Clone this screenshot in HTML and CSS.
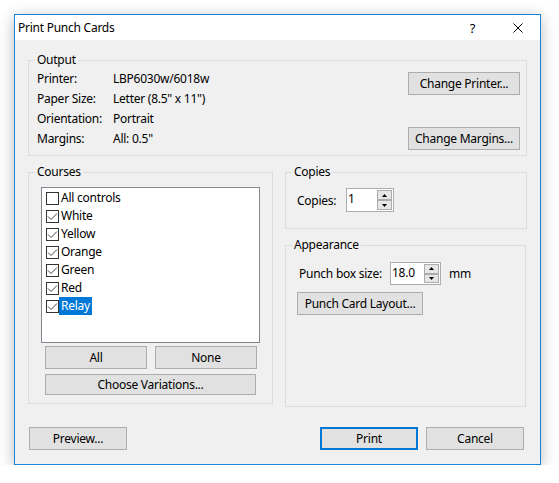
FILE: index.html
```html
<!DOCTYPE html>
<html>
<head>
<meta charset="utf-8">
<title>Print Punch Cards</title>
<link rel="stylesheet" href="styles.css">
</head>
<body>
<div class="window">
  <div class="titlebar">
    <span class="title">Print Punch Cards</span>
    <span class="cap-btn help">?</span>
    <span class="cap-btn close"><svg width="10" height="10" viewBox="0 0 10 10"><path d="M0.5 0.5 L9.5 9.5 M9.5 0.5 L0.5 9.5" stroke="#000" stroke-width="1"/></svg></span>
  </div>
  <div class="dlg-body">
    <fieldset class="group output">
      <legend>Output</legend>
      <div class="output-inner">
        <div class="props">
          <span>Printer:</span><span>LBP6030w/6018w</span>
          <span>Paper Size:</span><span>Letter (8.5" x 11")</span>
          <span>Orientation:</span><span>Portrait</span>
          <span>Margins:</span><span>All: 0.5"</span>
        </div>
        <div class="output-buttons">
          <button class="btn btn-wide">Change Printer...</button>
          <button class="btn btn-wide">Change Margins...</button>
        </div>
      </div>
    </fieldset>

    <div class="middle">
      <fieldset class="group courses">
        <legend>Courses</legend>
        <div class="courses-inner">
          <div class="listbox">
            <div class="item"><span class="check"></span><span class="item-label">All controls</span></div>
            <div class="item"><span class="check checked"><svg width="11" height="11" viewBox="0 0 11 11"><path d="M1 5.5 L4 8.5 L10 2.5" fill="none" stroke="#444" stroke-width="1"/></svg></span><span class="item-label">White</span></div>
            <div class="item"><span class="check checked"><svg width="11" height="11" viewBox="0 0 11 11"><path d="M1 5.5 L4 8.5 L10 2.5" fill="none" stroke="#444" stroke-width="1"/></svg></span><span class="item-label">Yellow</span></div>
            <div class="item"><span class="check checked"><svg width="11" height="11" viewBox="0 0 11 11"><path d="M1 5.5 L4 8.5 L10 2.5" fill="none" stroke="#444" stroke-width="1"/></svg></span><span class="item-label">Orange</span></div>
            <div class="item"><span class="check checked"><svg width="11" height="11" viewBox="0 0 11 11"><path d="M1 5.5 L4 8.5 L10 2.5" fill="none" stroke="#444" stroke-width="1"/></svg></span><span class="item-label">Green</span></div>
            <div class="item"><span class="check checked"><svg width="11" height="11" viewBox="0 0 11 11"><path d="M1 5.5 L4 8.5 L10 2.5" fill="none" stroke="#444" stroke-width="1"/></svg></span><span class="item-label">Red</span></div>
            <div class="item"><span class="check checked"><svg width="11" height="11" viewBox="0 0 11 11"><path d="M1 5.5 L4 8.5 L10 2.5" fill="none" stroke="#444" stroke-width="1"/></svg></span><span class="item-label selected">Relay</span></div>
          </div>
          <div class="list-buttons">
            <button class="btn btn-half">All</button>
            <button class="btn btn-half">None</button>
          </div>
          <button class="btn btn-variations">Choose Variations...</button>
        </div>
      </fieldset>

      <div class="right-col">
        <fieldset class="group copies">
          <legend>Copies</legend>
          <div class="copies-inner">
            <span class="copies-label">Copies:</span>
            <div class="spin spin-copies">
              <span class="spin-text">1</span>
              <span class="spin-btns">
                <span class="spin-btn"><svg width="5" height="3" viewBox="0 0 5 3"><path d="M2.5 0 L5 3 L0 3 Z" fill="#000"/></svg></span>
                <span class="spin-btn"><svg width="5" height="3" viewBox="0 0 5 3"><path d="M0 0 L5 0 L2.5 3 Z" fill="#000"/></svg></span>
              </span>
            </div>
          </div>
        </fieldset>

        <fieldset class="group appearance">
          <legend>Appearance</legend>
          <div class="appearance-inner">
            <div class="size-row">
              <span class="size-label">Punch box size:</span>
              <div class="spin spin-size">
                <span class="spin-text">18.0</span>
                <span class="spin-btns">
                  <span class="spin-btn"><svg width="5" height="3" viewBox="0 0 5 3"><path d="M2.5 0 L5 3 L0 3 Z" fill="#000"/></svg></span>
                  <span class="spin-btn"><svg width="5" height="3" viewBox="0 0 5 3"><path d="M0 0 L5 0 L2.5 3 Z" fill="#000"/></svg></span>
                </span>
              </div>
              <span class="unit">mm</span>
            </div>
            <button class="btn btn-layout">Punch Card Layout...</button>
          </div>
        </fieldset>
      </div>
    </div>

    <div class="footer">
      <button class="btn btn-footer">Preview...</button>
      <div class="footer-right">
        <button class="btn btn-footer btn-default">Print</button>
        <button class="btn btn-footer">Cancel</button>
      </div>
    </div>
  </div>
</div>
</body>
</html>
```

FILE: styles.css
```css
* {
  box-sizing: border-box;
}

html,
body {
  margin: 0;
  padding: 0;
  background: #ffffff;
}

body {
  font-family: "Noto Sans", "Segoe UI", sans-serif;
  font-size: 12px;
  letter-spacing: -0.25px;
  color: #000000;
}

.window {
  margin: 14px 0 0 14px;
  width: 527px;
  height: 451px;
  border: 1px solid #1c84d8;
  background: #f0f0f0;
  box-shadow: 0 3px 14px rgba(0, 0, 0, 0.28);
  display: flex;
  flex-direction: column;
}

.titlebar {
  height: 25px;
  background: #ffffff;
  display: flex;
  align-items: center;
  padding-left: 3px;
}

.title {
  flex: 1;
  line-height: 16px;
}

.cap-btn {
  width: 45px;
  height: 25px;
  display: flex;
  align-items: center;
  justify-content: center;
}

.help {
  font-size: 13px;
}

.dlg-body {
  flex: 1;
  padding: 12px 13px 14px 13px;
  display: flex;
  flex-direction: column;
}

.group {
  margin: 0;
  padding: 0;
  border: 1px solid #dcdcdc;
  min-width: 0;
}

.group legend {
  margin-left: 6px;
  padding: 0 2px;
  line-height: 16px;
}

.output-inner {
  display: flex;
  padding: 0 6px 5px 8px;
}

.props {
  flex: 1;
  display: grid;
  grid-template-columns: 76px auto;
  grid-auto-rows: 20px;
  align-items: center;
}

.output-buttons {
  display: flex;
  flex-direction: column;
  justify-content: space-between;
  padding-top: 4px;
  height: 82px;
}

.btn {
  font-family: inherit;
  font-size: 12px;
  letter-spacing: inherit;
  color: #000000;
  background: #e1e1e1;
  border: 1px solid #adadad;
  height: 23px;
  padding: 0;
  margin: 0;
  line-height: 16px;
}

.btn-wide {
  width: 112px;
}

.middle {
  display: flex;
  margin-top: 8px;
  gap: 12px;
  align-items: flex-start;
}

.courses {
  width: 245px;
  height: 240px;
}

.courses-inner {
  padding: 7px 0 0 12px;
}

.listbox {
  width: 219px;
  height: 156px;
  background: #ffffff;
  border: 1px solid #828790;
  padding: 1px 0 0 4px;
}

.item {
  height: 18px;
  display: flex;
  align-items: center;
}

.check {
  width: 13px;
  height: 13px;
  border: 1px solid #333333;
  background: #ffffff;
  display: flex;
  align-items: center;
  justify-content: center;
}

.item-label {
  padding: 0 2px;
  height: 18px;
  line-height: 18px;
}

.selected {
  background: #0078d7;
  color: #ffffff;
}

.list-buttons {
  display: flex;
  gap: 8px;
  margin: 3px 0 0 4px;
}

.btn-half {
  width: 102px;
}

.btn-variations {
  display: block;
  margin: 5px 0 0 4px;
  width: 211px;
  height: 21px;
}

.right-col {
  display: flex;
  flex-direction: column;
  gap: 8px;
}

.copies {
  width: 242px;
  height: 65px;
}

.copies-inner {
  display: flex;
  align-items: center;
  padding: 8px 0 0 11px;
}

.copies-label {
  width: 49px;
}

.spin {
  display: flex;
  background: #ffffff;
  border: 1px solid #abadb3;
  height: 24px;
}

.spin-copies {
  width: 48px;
}

.spin-size {
  width: 51px;
  height: 23px;
}

.spin-text {
  flex: 1;
  padding-left: 1px;
  line-height: 20px;
}

.spin-btns {
  width: 16px;
  display: flex;
  flex-direction: column;
  padding: 1px 1px 1px 0;
}

.spin-btn {
  flex: 1;
  background: #e6e6e6;
  border: 1px solid #acacac;
  display: flex;
  align-items: center;
  justify-content: center;
}

.appearance {
  width: 241px;
  height: 170px;
}

.appearance-inner {
  padding: 9px 0 0 11px;
}

.size-row {
  display: flex;
  align-items: center;
  padding-left: 2px;
}

.size-label {
  width: 91px;
}

.unit {
  margin-left: 8px;
}

.btn-layout {
  display: block;
  margin-top: 7px;
  width: 126px;
}

.footer {
  margin-top: auto;
  display: flex;
  justify-content: space-between;
  padding: 0 3px 0 1px;
}

.footer-right {
  display: flex;
  gap: 8px;
}

.btn-footer {
  width: 98px;
}

.btn-default {
  border: 2px solid #0078d7;
}
```
